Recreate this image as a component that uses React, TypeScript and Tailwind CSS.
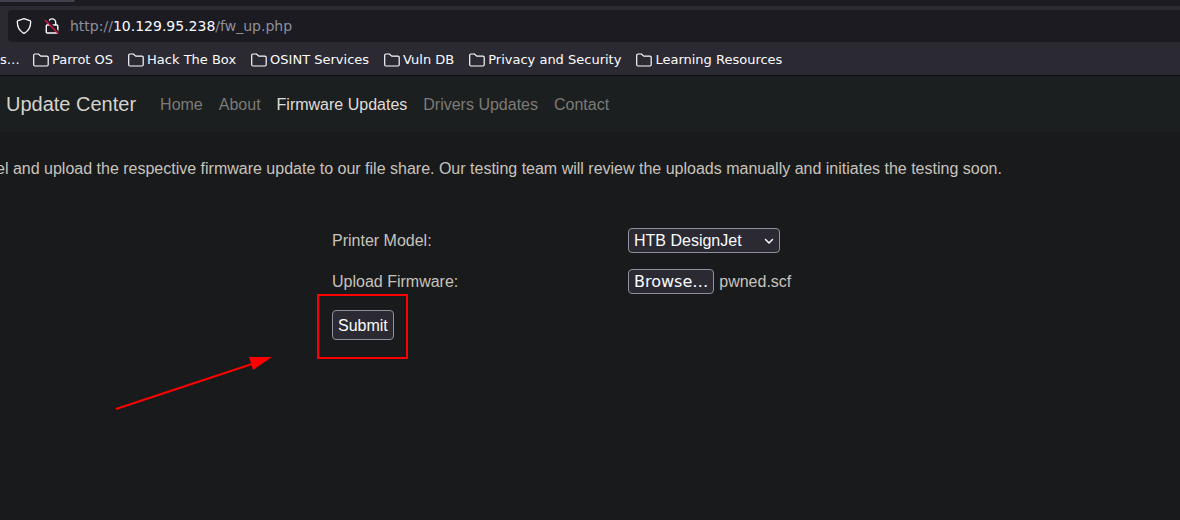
import { useRef, useState } from "react";

const bookmarks = [
  "Parrot OS",
  "Hack The Box",
  "OSINT Services",
  "Vuln DB",
  "Privacy and Security",
  "Learning Resources",
];

const links = [
  { label: "Home", active: false },
  { label: "About", active: false },
  { label: "Firmware Updates", active: true },
  { label: "Drivers Updates", active: false },
  { label: "Contact", active: false },
];

function FolderIcon() {
  return (
    <svg className="h-4 w-4 shrink-0" viewBox="0 0 16 16" fill="none" stroke="#fbfbfe" strokeWidth="1.2" strokeLinejoin="round" aria-hidden="true">
      <path d="M2 2H5.400l2.300 2.100H13.900c.8 0 1.300.5 1.300 1.200v7.500c0 .7-.5 1.200-1.300 1.200H2c-.8 0-1.300-.5-1.300-1.200V3.200C.7 2.500 1.200 2 2 2Z" />
    </svg>
  );
}

function ShieldIcon() {
  return (
    <svg className="h-4 w-4 shrink-0" viewBox="0 0 16 16" fill="none" stroke="#fbfbfe" strokeWidth="1.3" strokeLinejoin="round" aria-hidden="true">
      <path d="M8 .7 13.900 2.700c.5.200.8.600.8 1.100 0 3.900-.7 8.200-6.100 11.300-.4.200-.8.200-1.200 0C2 12 1.300 7.700 1.300 3.800c0-.5.300-.9.800-1.100Z" />
    </svg>
  );
}

function InsecureIcon() {
  return (
    <svg className="h-4 w-4 shrink-0" viewBox="0 0 16 16" fill="none" aria-hidden="true">
      <path d="M4.500 7V4.500a3.600 3.600 0 0 1 7.200 0V7M3.300 7h9.500c.6 0 1 .4 1 1v6c0 .6-.4 1-1 1H3.300c-.6 0-1-.4-1-1V8c0-.6.4-1 1-1Z" stroke="#fbfbfe" strokeWidth="1.400" />
      <path d="M2.300 1.300 15 15" stroke="#1c1b22" strokeWidth="2" />
      <path d="M1 2 14.300 15.700" stroke="#e2143f" strokeWidth="1.400" />
    </svg>
  );
}

export default function App() {
  const fileRef = useRef<HTMLInputElement>(null);
  const [fileName, setFileName] = useState("pwned.scf");

  return (
    <div className="min-h-screen overflow-hidden bg-[#191a1b] font-['Liberation_Sans',sans-serif] text-base text-[#c8c3bc]">
      <header className="border-b border-[#0c0c0d] bg-[#2b2a33] font-['DejaVu_Sans',sans-serif] text-[#fbfbfe]">
        <div className="h-[6px] bg-[#1c1b22]">
          <div className="h-[2px] w-[75px] rounded-br bg-[#42414d]" />
        </div>
        <div className="pt-1 pl-2">
          <div className="flex h-8 items-center rounded-l bg-[#1c1b22] pl-2">
            <ShieldIcon />
            <span className="ml-3 flex">
              <InsecureIcon />
            </span>
            <p className="ml-[10px] text-[14px] text-[#8f8f9a]">
              http://<span className="text-[#fbfbfe]">10.129.95.238</span>/fw_up.php
            </p>
          </div>
        </div>
        <nav aria-label="Bookmarks" className="flex h-[33px] items-center gap-[15px] pt-[3px] text-[13px] whitespace-nowrap">
          <a href="#" className="w-[18px]">s…</a>
          {bookmarks.map((name) => (
            <a key={name} href="#" className="flex items-center gap-[3px]">
              <FolderIcon />
              {name}
            </a>
          ))}
        </nav>
      </header>

      <nav aria-label="Main" className="flex h-14 items-center bg-[#1b1f1f] pl-[6px] whitespace-nowrap">
        <a href="#" className="mr-6 text-xl text-[#d6d3cd]">Update Center</a>
        <div className="flex gap-4 pt-[2px]">
          {links.map((link) => (
            <a key={link.label} href="#" className={link.active ? "text-[#e0ddd8]" : "text-[#7d7a76]"}>
              {link.label}
            </a>
          ))}
        </div>
      </nav>

      <main className="pt-[25px]">
        <p className="-ml-1 whitespace-nowrap">
          el and upload the respective firmware update to our file share. Our testing team will review the uploads manually and initiates the testing soon.
        </p>

        <form className="mt-[47px] ml-[332px]" onSubmit={(e) => e.preventDefault()}>
          <div className="grid grid-cols-[296px_1fr] items-center gap-y-4">
            <label htmlFor="model">Printer Model:</label>
            <div className="relative flex w-[152px] items-center">
              <select id="model" className="h-[25px] w-full appearance-none rounded border border-[#8f8f9d] bg-[#2b2a33] pl-[5px] leading-5 text-[#fbfbfe]">
                <option>HTB DesignJet</option>
              </select>
              <svg className="pointer-events-none absolute right-[6px] h-[10px] w-[10px]" viewBox="0 0 10 10" fill="none" stroke="#fbfbfe" strokeWidth="1.500" strokeLinecap="round" strokeLinejoin="round" aria-hidden="true">
                <path d="M1.500 3.500 5 7l3.500-3.500" />
              </svg>
            </div>
            <label htmlFor="firmware">Upload Firmware:</label>
            <div className="flex items-center gap-[5px]">
              <button
                type="button"
                onClick={() => fileRef.current?.click()}
                className="h-[25px] rounded border border-[#8f8f9d] bg-[#2b2a33] px-[5px] font-['DejaVu_Sans',sans-serif] leading-5 text-[#fbfbfe]"
              >
                Browse…
              </button>
              <span>{fileName}</span>
              <input
                ref={fileRef}
                id="firmware"
                type="file"
                className="hidden"
                onChange={(e) => setFileName(e.target.files?.[0]?.name ?? "No file selected.")}
              />
            </div>
          </div>

          <div className="relative mt-4 w-fit">
            <button type="submit" className="block h-[30px] rounded border border-[#8f8f9d] bg-[#2b2a33] px-[5px] pt-[2px] text-[#fbfbfe]">
              Submit
            </button>
            <div className="pointer-events-none absolute -top-4 -left-[15px] h-[65px] w-[91px] border-2 border-[#ff0000]" />
            <svg className="pointer-events-none absolute top-[46px] -left-[217px] h-[56px] w-[158px]" viewBox="0 0 158 56" aria-hidden="true">
              <path d="M1 53 137 8" stroke="#ff0000" strokeWidth="2" />
              <path d="M134 1h23l-19 13Z" fill="#ff0000" />
            </svg>
          </div>
        </form>
      </main>
    </div>
  );
}
